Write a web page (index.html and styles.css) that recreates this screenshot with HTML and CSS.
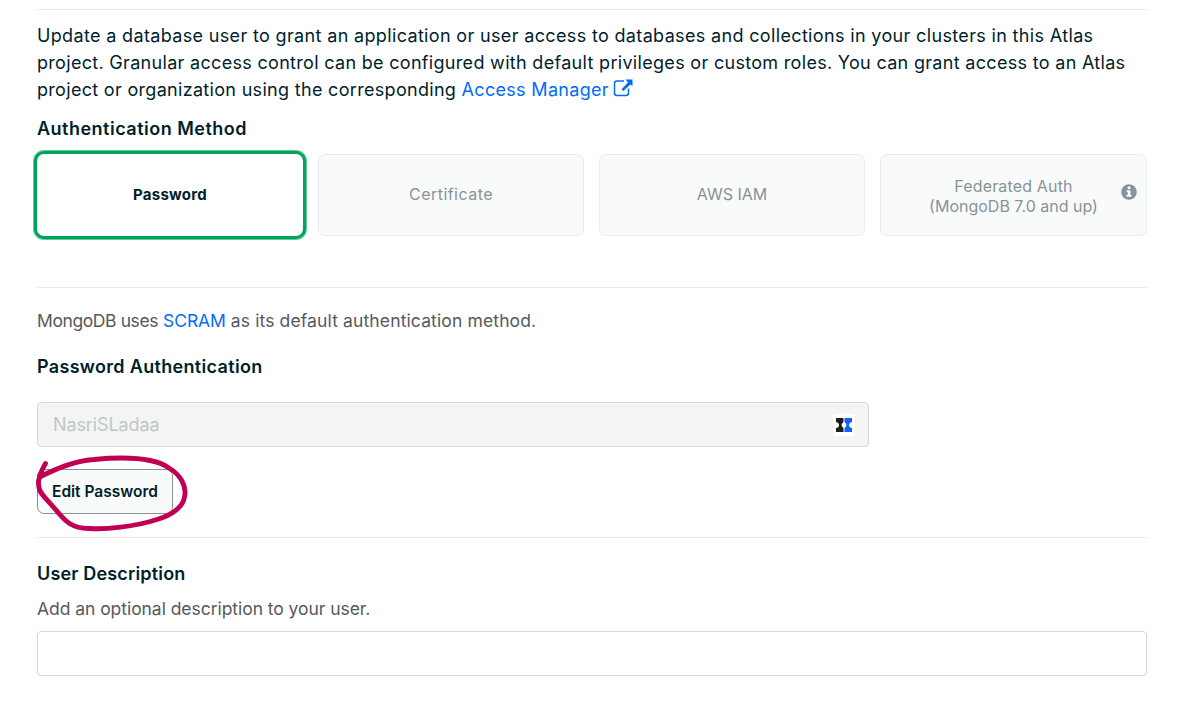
FILE: index.html
```html
<!DOCTYPE html>
<html lang="en">
<head>
<meta charset="utf-8">
<title>Edit Database User</title>
<link rel="stylesheet" href="styles.css">
</head>
<body>
<main class="form">
  <p class="intro">
    <span class="line line-first">Update a database user to grant an application or user access to databases and collections in your clusters in this Atlas</span>
    <span class="line">project. Granular access control can be configured with default privileges or custom roles. You can grant access to an Atlas</span>
    <span class="line">project or organization using the corresponding <a class="link" href="#">Access Manager</a><svg class="external" viewBox="0 0 20 18"><path d="M11 2H4Q1.500 2 1.500 4.500V14Q1.500 16.500 4 16.500H13Q15.500 16.500 15.500 14V9.500" fill="none" stroke="currentColor" stroke-width="1.500"/><path d="M12.500 0.500H19.500V7L17.300 5.400L10.400 12.100L8.500 10.200L15 3.400Z" fill="currentColor"/></svg></span>
  </p>
  <h2 class="heading auth-title">Authentication Method</h2>
  <div class="methods">
    <button class="method method-active">Password</button>
    <button class="method method-cert">Certificate</button>
    <button class="method">AWS IAM</button>
    <button class="method method-federated"><span class="federated-name">Federated Auth</span><span>(MongoDB 7.0 and up)</span>
      <svg class="info" viewBox="0 0 16 16"><circle cx="8" cy="8" r="7.800" fill="#889397"/><path d="M6.700 2.600H9.400V5H6.700ZM5.600 6.200H9.400V11H10.500V12.700H5.600V11H6.700V7.800H5.600Z" fill="#fff"/></svg>
    </button>
  </div>
  <section class="section scram">
    <p class="copy"><span class="copy-tight">MongoDB uses</span> <a class="link" href="#">SCRAM</a> <span class="copy-wide">as its default authentication method.</span></p>
    <h2 class="heading password-title">Password Authentication</h2>
    <div class="field username"><span>NasriSLadaa</span>
      <svg class="manager" viewBox="0 0 22 22"><rect width="22" height="22" rx="3" fill="#fff"/><path d="M3 4H10.500V8L9 9.500Q8 11 9 12.500L10.500 14V18H3V14Q6 13.500 6 11T3 8Z" fill="#1d1d1b"/><path d="M11.500 4H19V8Q16 8.500 16 11T19 14V18H11.500V14L13 12.500Q14 11 13 9.500L11.500 8Z" fill="#0f62fe"/></svg>
    </div>
    <div class="edit-row"><button class="edit">Edit Password</button>
      <svg class="scribble" viewBox="0 0 160 84"><path d="M15.500 12.500Q12 18 9.500 26C22 20 42 10 64 8.500C90 6 122 5 139 17C151 24 157 36 154.500 46C153 56 142 64 127 68.500C104 76 75 78.500 60 77.500C42 78 35 70 26 59C15 46 9 42 9 36C8 31 8.500 27 11 25.500" fill="none" stroke="#c00053" stroke-width="4.900" stroke-linecap="round" stroke-linejoin="round"/></svg>
    </div>
  </section>
  <section class="section description">
    <h2 class="heading user-title">User Description</h2>
    <p class="copy">Add an optional description to your user.</p>
    <div class="field"></div>
  </section>
</main>
</body>
</html>
```
FILE: styles.css
```css
* { box-sizing: border-box; }
body { margin: 0; background: #fff; color: #001e2b; font-family: Inter, "Open Sans", sans-serif; font-size: 18px; }
p, h2 { margin: 0; }
.form { width: 1110px; margin: 9px 0 0 37px; border-top: 1px solid #e8edeb; padding-top: 12px; }
.line { display: block; white-space: nowrap; line-height: 27px; letter-spacing: 0.31px; }
.line-first { letter-spacing: 0.346px; }
.link { color: #016bf8; text-decoration: none; }
.external { width: 20px; height: 18px; margin-left: 4px; color: #016bf8; vertical-align: -1px; }
.heading { font-size: 18px; font-weight: 600; line-height: 24px; white-space: nowrap; }
.auth-title { margin-top: 14px; letter-spacing: 0.49px; }
.password-title { letter-spacing: 0.32px; }
.user-title { letter-spacing: 0.17px; }
.methods { display: grid; grid-template-columns: 266px 266px 266px 267px; gap: 15px; margin-top: 13px; }
.method { position: relative; display: flex; flex-direction: column; align-items: center; justify-content: center; height: 82px; padding: 0 0 2px; border: 1px solid #e8edeb; border-radius: 7px; background: #f9fbfa; color: #889397; font: 400 16px/20px Inter, sans-serif; }
.method-active { padding: 0; border: 0; background: #fff; color: #001e2b; font-weight: 700; font-size: 15px; letter-spacing: 0.25px; box-shadow: 0 0 0 3px #00a35c, 0 0 0 4px rgba(0, 163, 92, 0.6); }
.method-cert { letter-spacing: 0.46px; }
.method-federated { padding: 2px 0 0; }
.federated-name { letter-spacing: 0.16px; }
.info { position: absolute; right: 9px; top: 29px; width: 16px; height: 16px; }
.section { border-top: 1px solid #e8edeb; }
.scram { margin-top: 51px; padding-top: 20px; }
.copy { color: #56595c; font-size: 17.5px; line-height: 26px; white-space: nowrap; letter-spacing: -0.05px; }
.copy-tight { letter-spacing: -0.4px; }
.copy-wide { letter-spacing: 0.13px; }
.field { display: flex; align-items: center; justify-content: space-between; height: 45px; border: 1px solid #d5dad9; border-radius: 4px; }
.username { width: 832px; margin-top: 23px; padding: 0 13px 0 15px; background: #f3f5f4; color: #c1c7c6; letter-spacing: -0.1px; }
.scram .heading { margin-top: 21px; }
.manager { width: 22px; height: 22px; }
.edit-row { position: relative; margin-top: 22px; height: 45px; }
.edit { width: 136px; height: 45px; padding: 0; border: 1px solid #889397; border-radius: 7px; background: #f9fbfa; color: #001e2b; font: 600 15.5px/20px Inter, sans-serif; }
.scribble { position: absolute; left: -7px; top: -18px; width: 160px; height: 84px; }
.description { margin-top: 23px; padding-top: 24px; }
.description .copy { margin-top: 10px; }
.description .field { margin-top: 9px; }
```
